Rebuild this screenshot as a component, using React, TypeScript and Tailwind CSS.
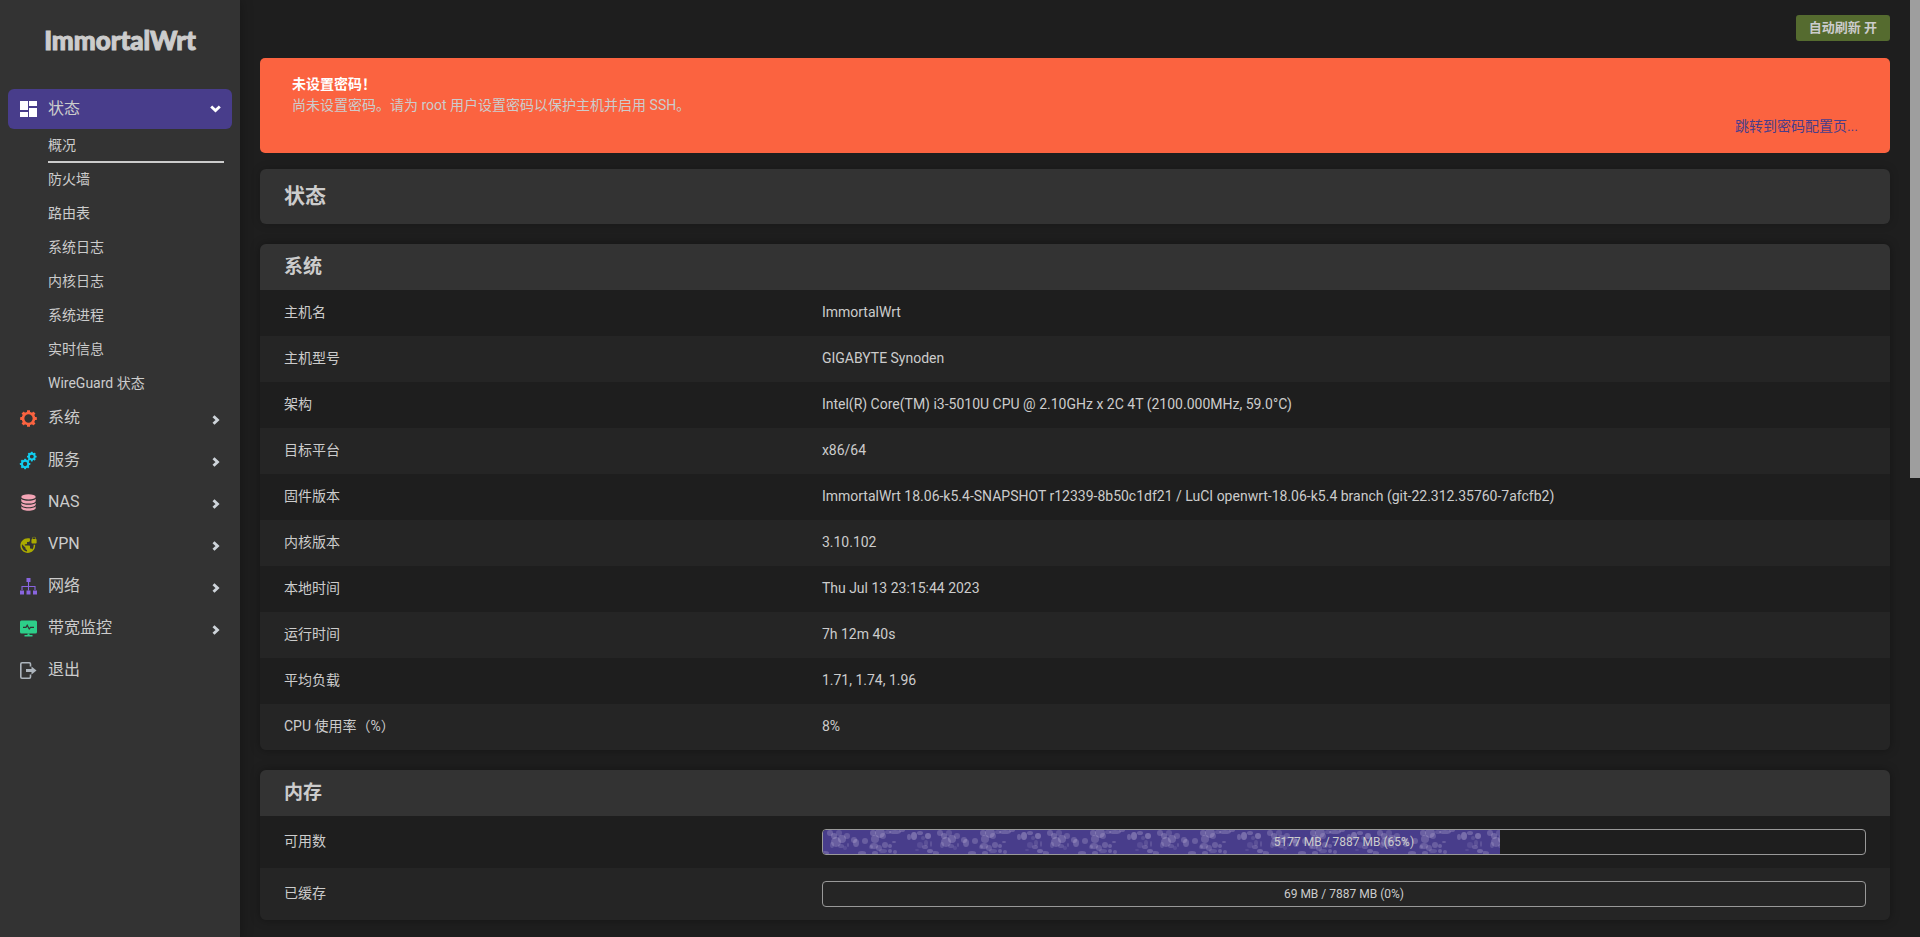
import type { ReactNode } from "react";
import { MdVpnLock } from "react-icons/md";

const GEAR_ANGLES = [0, 45, 90, 135, 180, 225, 270, 315];

function Cog({ cx, cy, r, stroke, tooth }: { cx: number; cy: number; r: number; stroke: number; tooth: number }) {
  return (
    <g>
      <circle cx={cx} cy={cy} r={r} fill="none" stroke="currentColor" strokeWidth={stroke} />
      {GEAR_ANGLES.map((a) => (
        <rect
          key={a}
          x={cx - tooth / 2}
          y={cy - r - stroke / 2 - tooth * 0.5}
          width={tooth}
          height={tooth}
          rx={0.4}
          fill="currentColor"
          transform={`rotate(${a} ${cx} ${cy})`}
        />
      ))}
    </g>
  );
}

function Svg({ children }: { children: ReactNode }) {
  return (
    <svg viewBox="0 0 17 17" className="size-[17px] overflow-visible" aria-hidden="true">
      {children}
    </svg>
  );
}

const DashboardIcon = () => (
  <Svg>
    <path fill="currentColor" d="M0 0h8v9H0zM9 0h8v5H9zM0 11h8v5H0zM9 7h8v9H9z" />
  </Svg>
);
const GearIcon = () => (
  <Svg>
    <Cog cx={8.5} cy={8.5} r={5.5} stroke={2.7} tooth={3} />
  </Svg>
);
const GearsIcon = () => (
  <Svg>
    <Cog cx={11.8} cy={4.6} r={2.9} stroke={1.9} tooth={1.9} />
    <Cog cx={5.1} cy={12} r={3.2} stroke={2.1} tooth={2} />
  </Svg>
);
const DatabaseIcon = () => (
  <Svg>
    <ellipse cx="8.5" cy="2.9" rx="7.2" ry="2.7" fill="currentColor" />
    <path
      fill="currentColor"
      d="M1.3 4.8c1 1.5 4 2 7.2 2s6.200-.5 7.200-2v2.100c0 1.600-3.200 2.700-7.200 2.700s-7.200-1.100-7.200-2.700zM1.300 8.700c1 1.500 4 2 7.200 2s6.200-.5 7.200-2v1.900c0 1.600-3.200 2.700-7.200 2.700s-7.200-1.100-7.200-2.700zM1.300 12.300c1 1.500 4 2 7.200 2s6.200-.5 7.200-2v1.700c0 1.600-3.200 2.700-7.200 2.700s-7.200-1.100-7.200-2.700z"
    />
  </Svg>
);
const VpnIcon = () => <MdVpnLock viewBox="1 0 22 23" className="size-[17px]" aria-hidden="true" />;
const SitemapIcon = () => (
  <Svg>
    <path
      fill="currentColor"
      d="M6.500 0h4v4h-4zM0 12.500h4v4H0zM6.500 12.500h4v4h-4zM13 12.500h4v4h-4z"
    />
    <path fill="none" stroke="currentColor" strokeWidth="1.100" d="M8.500 4v8.500M2 12V8.500h13V12" />
  </Svg>
);
const MonitorIcon = () => (
  <Svg>
    <rect x="0" y="0.500" width="17" height="13" rx="1.500" fill="currentColor" />
    <path fill="currentColor" d="M7.500 13.500h2v1.500h3v1.500h-8V15h3z" />
    <path fill="none" stroke="#333" strokeWidth="1.200" d="M3 7.300h3l1.200-2 2 3.700 1.300-1.700H14" />
  </Svg>
);
const ExitIcon = () => (
  <Svg>
    <path
      fill="none"
      stroke="currentColor"
      strokeWidth="1.600"
      d="M10.500 4.500V2q0-1.200-1.200-1.200H2Q.8.800.8 2v13q0 1.200 1.200 1.200h7.300q1.200 0 1.200-1.200v-2.500"
    />
    <path fill="currentColor" d="M6 7h5.500V4.500l5 4-5 4V10H6z" />
  </Svg>
);

const ChevronRight = () => (
  <svg viewBox="0 0 8 10" className="h-[10px] w-2 text-[#ced4da]" aria-hidden="true">
    <path d="M1.500 1.200 5.500 5l-4 3.800" fill="none" stroke="currentColor" strokeWidth="2.900" />
  </svg>
);
const ChevronDown = () => (
  <svg viewBox="0 0 11 8" className="h-2 w-[11px] text-white" aria-hidden="true">
    <path d="M1.200 1.500 5.500 5.500l4.300-4" fill="none" stroke="currentColor" strokeWidth="2.900" />
  </svg>
);

const submenu = ["概况", "防火墙", "路由表", "系统日志", "内核日志", "系统进程", "实时信息", "WireGuard 状态"];

const menu = [
  { label: "系统", icon: <GearIcon />, color: "text-[#fb6340]", more: true },
  { label: "服务", icon: <GearsIcon />, color: "text-[#11cdef]", more: true },
  { label: "NAS", icon: <DatabaseIcon />, color: "text-[#f3a4b5]", more: true },
  { label: "VPN", icon: <VpnIcon />, color: "text-[#aaaa00]", more: true },
  { label: "网络", icon: <SitemapIcon />, color: "text-[#8965e0]", more: true },
  { label: "带宽监控", icon: <MonitorIcon />, color: "text-[#2dce89]", more: true },
  { label: "退出", icon: <ExitIcon />, color: "text-[#adb5bd]", more: false },
];

const systemInfo = [
  ["主机名", "ImmortalWrt"],
  ["主机型号", "GIGABYTE Synoden"],
  ["架构", "Intel(R) Core(TM) i3-5010U CPU @ 2.10GHz x 2C 4T (2100.000MHz, 59.0°C)"],
  ["目标平台", "x86/64"],
  ["固件版本", "ImmortalWrt 18.06-k5.4-SNAPSHOT r12339-8b50c1df21 / LuCI openwrt-18.06-k5.4 branch (git-22.312.35760-7afcfb2)"],
  ["内核版本", "3.10.102"],
  ["本地时间", "Thu Jul 13 23:15:44 2023"],
  ["运行时间", "7h 12m 40s"],
  ["平均负载", "1.71, 1.74, 1.96"],
  ["CPU 使用率（%）", "8%"],
];

const memory = [
  { label: "可用数", text: "5177 MB / 7887 MB (65%)", percent: 65 },
  { label: "已缓存", text: "69 MB / 7887 MB (0%)", percent: 0 },
];

// cx, cy, rx, ry, opacity of each blossom in the 110px wide tile
const BLOSSOMS = [
  [7, 3, 3, 3, 0.2], [11, 6, 3, 3, 0.22], [16, 3, 3, 3, 0.15], [13, 12, 5, 5, 0.2], [19, 9, 4, 4, 0.22],
  [24, 6, 3, 3, 0.18], [9, 15, 2, 3, 0.15], [18, 16, 3, 2, 0.15], [31, 10, 3, 3, 0.2], [33, 13, 3, 4, 0.22],
  [42, 11, 3, 3, 0.2], [25, 15, 1, 2, 0.15], [50, 3, 3, 3, 0.22], [57, 3, 5, 5, 0.22], [52, 9, 4, 4, 0.2],
  [60, 6, 3, 3, 0.18], [51, 16, 4, 3, 0.2], [56, 18, 3, 3, 0.18], [62, 15, 3, 3, 0.2], [67, 16, 2, 2, 0.22],
  [71, 12, 2, 1, 0.2], [72, 2, 6, 2, 0.22], [65, 2, 3, 2, 0.15], [79, 0, 3, 2, 0.2], [86, 7, 2, 3, 0.22],
  [91, 6, 3, 4, 0.3], [97, 3, 3, 2, 0.22], [105, 6, 3, 3, 0.3], [103, 13, 2, 3, 0.12], [97, 15, 3, 3, 0.1],
  [102, 17, 3, 2, 0.18], [107, 21, 3, 2, 0.25], [108, 14, 1, 3, 0.15], [100, 8, 2, 2, 0.12], [2, 23, 4, 2, 0.2],
  [39, 23, 4, 2, 0.22], [52, 23, 3, 2, 0.22], [60, 21, 4, 2, 0.15], [67, 21, 2, 2, 0.22], [72, 22, 2, 2, 0.2],
  [48, 17, 2, 2, 0.15], [22, 18, 2, 2, 0.1], [94, 20, 2, 1, 0.1],
];

function BlossomTexture() {
  return (
    <svg className="block h-full w-full" aria-hidden="true">
      <defs>
        <pattern id="blossoms" width="110" height="24" patternUnits="userSpaceOnUse">
          {BLOSSOMS.map(([cx, cy, rx, ry, o], i) => (
            <ellipse key={i} cx={cx} cy={cy} rx={rx} ry={ry} fill="#e9e0f5" opacity={o} />
          ))}
        </pattern>
      </defs>
      <rect width="100%" height="100%" fill="url(#blossoms)" />
    </svg>
  );
}

function UsageBar({ label, text, percent }: { label: string; text: string; percent: number }) {
  return (
    <div
      role="progressbar"
      aria-label={label}
      aria-valuenow={percent}
      aria-valuemin={0}
      aria-valuemax={100}
      className="relative h-[26px] overflow-hidden rounded border border-[#999]"
    >
      <div className="h-full bg-[#483d8b]" style={{ width: `${percent}%` }}>
        {percent > 0 && <BlossomTexture />}
      </div>
      <span className="absolute inset-0 text-center text-xs leading-[25px]">{text}</span>
    </div>
  );
}

function Section({ title, children }: { title: string; children: ReactNode }) {
  return (
    <section className="mb-5 overflow-hidden rounded-md shadow-[0_0_10px_rgba(0,0,0,0.35)]">
      <h3 className="bg-[#333] px-6 text-[19px] leading-[46px] font-bold">{title}</h3>
      <table className="w-full table-fixed border-collapse text-left">
        <tbody>{children}</tbody>
      </table>
    </section>
  );
}

export default function App() {
  return (
    <div className="flex min-h-screen bg-[#1e1e1e] font-[Roboto,'Noto_Sans_CJK_SC',sans-serif] text-sm text-[#ccc]">
      <aside className="w-60 shrink-0 bg-[#333] shadow-[0_0_12px_rgba(0,0,0,0.3)]">
        <a
          href="#"
          className="block pt-6 pb-[33px] text-center font-[Lato,sans-serif] text-[26px] leading-8 font-black [-webkit-text-stroke:1px_#ccc]"
        >
          ImmortalWrt
        </a>
        <nav>
          <button
            type="button"
            className="mx-2 flex h-10 w-56 items-center rounded-md bg-[#483d8b] pr-[11px] pl-3 text-base"
          >
            <span className="text-white">
              <DashboardIcon />
            </span>
            <span className="ml-[11px] flex-1 text-left">状态</span>
            <ChevronDown />
          </button>
          <ul className="mr-4 ml-12">
            {submenu.map((item, i) => (
              <li key={item}>
                <a
                  href="#"
                  className={`block h-[34px] border-b-2 leading-8 ${i === 0 ? "border-[#ccc]" : "border-transparent"}`}
                >
                  {item}
                </a>
              </li>
            ))}
          </ul>
          <ul className="flex flex-col gap-2 px-5">
            {menu.map(({ label, icon, color, more }) => (
              <li key={label}>
                <a href="#" className="flex h-[34px] items-center text-base">
                  <span className={color}>{icon}</span>
                  <span className="ml-[11px] flex-1">{label}</span>
                  {more && (
                    <span className="pt-1">
                      <ChevronRight />
                    </span>
                  )}
                </a>
              </li>
            ))}
          </ul>
        </nav>
      </aside>

      <main className="min-w-0 flex-1 pt-[15px] pr-[30px] pl-5">
        <div className="mb-[17px] flex justify-end">
          <button type="button" className="h-[26px] rounded-[3px] bg-[#556b2f] px-[13px] text-[13px] font-bold">
            自动刷新 开
          </button>
        </div>

        <div className="mb-4 rounded-[5px] bg-[#fb6340] px-8 py-4 leading-[21px]">
          <h4 className="font-bold text-white">未设置密码！</h4>
          <p>尚未设置密码。请为 root 用户设置密码以保护主机并启用 SSH。</p>
          <div className="text-right">
            <a href="#" className="text-[#483d8b]">
              跳转到密码配置页...
            </a>
          </div>
        </div>

        <h2 className="mb-5 rounded-md bg-[#333] px-6 text-[21px] leading-[55px] font-bold shadow-[0_0_10px_rgba(0,0,0,0.2)]">
          状态
        </h2>

        <Section title="系统">
          {systemInfo.map(([label, value]) => (
            <tr key={label} className="h-[46px] even:bg-[#252525]">
              <th scope="row" className="w-[33%] pb-0.5 pl-6 font-normal">
                {label}
              </th>
              <td className="px-6 pb-0.5">{value}</td>
            </tr>
          ))}
        </Section>

        <Section title="内存">
          {memory.map((m) => (
            <tr key={m.label} className="h-[52px] even:bg-[#252525]">
              <th scope="row" className="w-[33%] pb-0.5 pl-6 font-normal">
                {m.label}
              </th>
              <td className="px-6">
                <UsageBar {...m} />
              </td>
            </tr>
          ))}
        </Section>
      </main>

      <div className="fixed top-0 right-0 h-[51vh] w-[10px] bg-[#9e9e9e]" aria-hidden="true" />
    </div>
  );
}
